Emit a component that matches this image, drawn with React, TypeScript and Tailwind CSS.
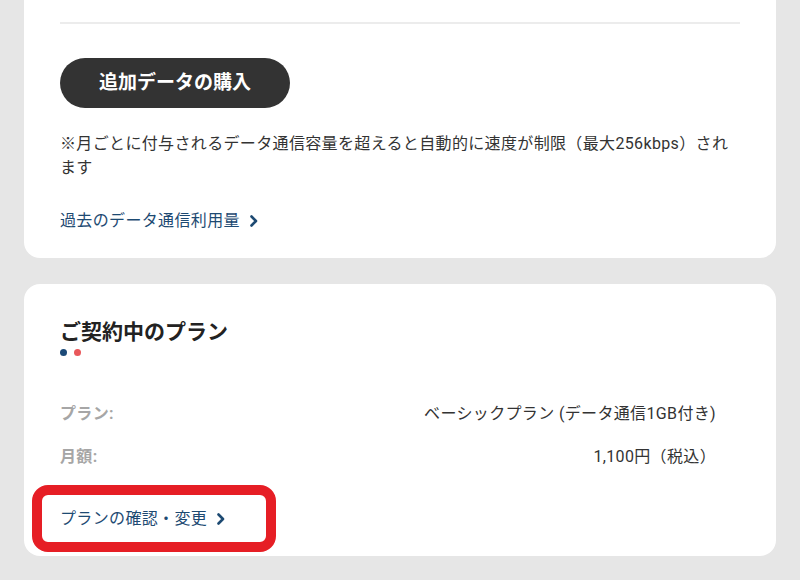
import React from "react";

const Chevron = () => (
  <svg width="10" height="12" viewBox="0 0 10 12" className="inline-block ml-[9px]" aria-hidden>
    <polyline points="2.5,1.5 7,6 2.5,10.5" fill="none" stroke="#1d4a72" strokeWidth="2.6" strokeLinecap="round" strokeLinejoin="round" />
  </svg>
);

export default function App() {
  return (
    <div
      className="w-[800px] h-[580px] overflow-hidden bg-[#e6e6e6] text-[#333333] tracking-[0.35px]"
      style={{ fontFamily: "Roboto, 'Noto Sans CJK JP', sans-serif" }}
    >
      <div className="mx-[24px] bg-white rounded-b-[16px] px-[36px] pt-[22px] pb-[25px]">
        <div className="h-[2px] bg-[#ececec]" />
        <button className="mt-[34px] w-[230px] h-[50px] rounded-full bg-[#333333] text-white text-[19px] font-bold flex items-center justify-center tracking-normal">
          追加データの購入
        </button>
        <p className="mt-[24px] text-[16px] leading-[24px] text-[#333333]">
          ※月ごとに付与されるデータ通信容量を超えると自動的に速度が制限（最大256kbps）されます
        </p>
        <a className="mt-[29px] flex items-center text-[16px] leading-[24px] text-[#1d4a72]">
          過去のデータ通信利用量
          <Chevron />
        </a>
      </div>

      <div className="relative mx-[24px] mt-[26px] bg-white rounded-[16px] px-[36px] pt-[33px] h-[272px]">
        <h2 className="text-[21px] leading-[30px] font-bold text-[#222222] tracking-normal">ご契約中のプラン</h2>
        <div className="mt-[2px] flex gap-[7px]">
          <span className="w-[7px] h-[7px] rounded-full bg-[#1c4a78]" />
          <span className="w-[7px] h-[7px] rounded-full bg-[#e9585b]" />
        </div>
        <div className="mt-[46px] flex flex-col gap-[19px] pr-[24px]">
          <div className="flex justify-between text-[16px] leading-[24px]">
            <span className="font-bold text-[#a6a6a6]">プラン:</span>
            <span className="text-[#333333]">ベーシックプラン (データ通信1GB付き)</span>
          </div>
          <div className="flex justify-between text-[16px] leading-[24px]">
            <span className="font-bold text-[#a6a6a6]">月額:</span>
            <span className="text-[#333333]">1,100円（税込）</span>
          </div>
        </div>
        <a className="mt-[38px] flex items-center text-[16px] leading-[24px] text-[#1d4a72]">
          プランの確認・変更
          <Chevron />
        </a>
        <div className="absolute left-[8px] top-[201px] w-[244px] h-[67px] border-[10px] border-[#e61e25] rounded-[16px] pointer-events-none" />
      </div>
    </div>
  );
}
